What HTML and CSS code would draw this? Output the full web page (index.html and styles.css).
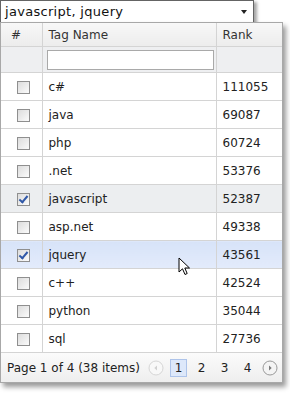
FILE: index.html
```html
<!DOCTYPE html>
<html>
<head>
  <title>Tag Picker</title>
  <meta charset="UTF-8">
  <link rel="stylesheet" href="styles.css">
</head>
<body>
  <div class="picker">
    <div class="combo">
      <span class="combo-text">javascript, jquery</span>
      <span class="combo-arrow"></span>
    </div>

    <div class="dropdown">
      <table class="grid">
        <colgroup>
          <col class="col-check">
          <col class="col-name">
          <col class="col-rank">
        </colgroup>
        <thead>
          <tr class="header-row">
            <th class="head-check">#</th>
            <th>Tag Name</th>
            <th>Rank</th>
          </tr>
          <tr class="filter-row">
            <td></td>
            <td><input type="text" class="filter-input"></td>
            <td></td>
          </tr>
        </thead>
        <tbody>
          <tr><td class="cell-check"><span class="check"></span></td><td>c#</td><td>111055</td></tr>
          <tr><td class="cell-check"><span class="check"></span></td><td>java</td><td>69087</td></tr>
          <tr><td class="cell-check"><span class="check"></span></td><td>php</td><td>60724</td></tr>
          <tr><td class="cell-check"><span class="check"></span></td><td>.net</td><td>53376</td></tr>
          <tr class="selected"><td class="cell-check"><span class="check checked"></span></td><td>javascript</td><td>52387</td></tr>
          <tr><td class="cell-check"><span class="check"></span></td><td>asp.net</td><td>49338</td></tr>
          <tr class="hover"><td class="cell-check"><span class="check checked"></span></td><td>jquery</td><td>43561</td></tr>
          <tr><td class="cell-check"><span class="check"></span></td><td>c++</td><td>42524</td></tr>
          <tr><td class="cell-check"><span class="check"></span></td><td>python</td><td>35044</td></tr>
          <tr><td class="cell-check"><span class="check"></span></td><td>sql</td><td>27736</td></tr>
        </tbody>
      </table>

      <div class="pager">
        <span class="pager-summary">Page 1 of 4 (38 items)</span>
        <div class="pager-nav">
          <span class="pager-btn">
            <svg width="16" height="16" viewBox="0 0 16 16"><circle cx="8" cy="8" r="7" fill="#f8f8f8" stroke="#d6d6d6"/><path d="M9 5.5 L6.3 8 L9 10.5 Z" fill="#d0d0d0"/></svg>
          </span>
          <span class="page-num current">1</span>
          <span class="page-num">2</span>
          <span class="page-num">3</span>
          <span class="page-num">4</span>
          <span class="pager-btn">
            <svg width="16" height="16" viewBox="0 0 16 16"><circle cx="8" cy="8" r="7" fill="#f4f4f4" stroke="#9a9a9a"/><path d="M7 5.5 L9.7 8 L7 10.5 Z" fill="#7a7a7a"/></svg>
          </span>
        </div>
      </div>
    </div>

    <svg class="cursor" width="14" height="20" viewBox="0 0 14 20">
      <path d="M1 1 L1 15 L4.5 11.8 L7 17.5 L9.2 16.5 L6.8 11 L11.5 11 Z" fill="#fff" stroke="#000" stroke-width="1" stroke-linejoin="round"/>
    </svg>
  </div>
</body>
</html>
```

FILE: styles.css
```css
body {
  margin: 0;
  background-color: #fff;
  font-family: "DejaVu Sans", sans-serif;
  font-size: 12px;
  color: #222;
}

.picker {
  position: relative;
  width: 290px;
  height: 393px;
}

/* Combo box */
.combo {
  width: 254px;
  height: 23px;
  box-sizing: border-box;
  border: 1px solid #646464;
  background-color: #fff;
  display: flex;
  align-items: center;
  justify-content: space-between;
  padding: 0 6px 0 4px;
  box-shadow: 3px 2px 3px rgba(0, 0, 0, 0.35);
  position: relative;
  z-index: 1;
}

.combo-text {
  color: #111;
  font-size: 13px;
  letter-spacing: 0.3px;
}

.combo-arrow {
  width: 0;
  height: 0;
  border-left: 3px solid transparent;
  border-right: 3px solid transparent;
  border-top: 4px solid #222;
}

/* Dropdown panel */
.dropdown {
  width: 283px;
  margin-top: -1px;
  box-sizing: border-box;
  border: 1px solid #a8a8a8;
  background-color: #fff;
  box-shadow: 3px 4px 5px rgba(0, 0, 0, 0.4);
  position: relative;
  z-index: 2;
}

.grid {
  width: 100%;
  border-collapse: collapse;
  table-layout: fixed;
}

.col-check { width: 41px; }
.col-rank { width: 66px; }

.grid th,
.grid td {
  border: 1px solid #d4d4d4;
  padding: 0 6px;
  text-align: left;
  font-weight: normal;
}

.grid tr > :first-child { border-left: none; }
.grid tr > :last-child { border-right: none; }
.grid thead tr:first-child > * { border-top: none; }

.header-row th {
  height: 23px;
  background: linear-gradient(#f8f8f8, #ececec);
  color: #333;
}

.header-row .head-check {
  padding-left: 10px;
}

.filter-row td {
  height: 25px;
  background-color: #eeeff1;
}

.filter-row td:nth-child(2) {
  padding: 0 2px 0 4px;
}

.filter-input {
  display: block;
  width: 100%;
  height: 20px;
  box-sizing: border-box;
  border: 1px solid #a9a9a9;
  background-color: #fff;
  margin: 0;
}

.grid tbody td {
  height: 27px;
}

.grid tbody .cell-check {
  padding: 0 0 0 4px;
  text-align: center;
}

.check {
  display: inline-block;
  width: 13px;
  height: 13px;
  box-sizing: border-box;
  border: 1px solid #8f8f8f;
  background: linear-gradient(135deg, #dcdcdc, #fbfbfb);
  vertical-align: middle;
  position: relative;
}

.check.checked::after {
  content: "";
  position: absolute;
  left: 3px;
  top: 0px;
  width: 3px;
  height: 7px;
  border-right: 2px solid #3058a8;
  border-bottom: 2px solid #3058a8;
  transform: rotate(40deg);
}

.selected td {
  background-color: #eceef0;
}

.hover td {
  background: linear-gradient(#d7e3f8, #e3ebfb);
}

/* Pager */
.pager {
  height: 29px;
  display: flex;
  align-items: center;
  justify-content: space-between;
  padding: 0 4px 0 6px;
  background: linear-gradient(#fbfbfb, #eeeeee);
}

.pager-nav {
  display: flex;
  align-items: center;
  gap: 6px;
}

.pager-btn {
  display: flex;
  width: 16px;
  height: 16px;
}

.page-num {
  width: 17px;
  height: 18px;
  box-sizing: border-box;
  display: flex;
  align-items: center;
  justify-content: center;
  color: #222;
  border: 1px solid transparent;
}

.page-num.current {
  background-color: #dde8fa;
  border-color: #aec4ea;
}

.cursor {
  position: absolute;
  left: 178px;
  top: 257px;
  z-index: 3;
}
```
